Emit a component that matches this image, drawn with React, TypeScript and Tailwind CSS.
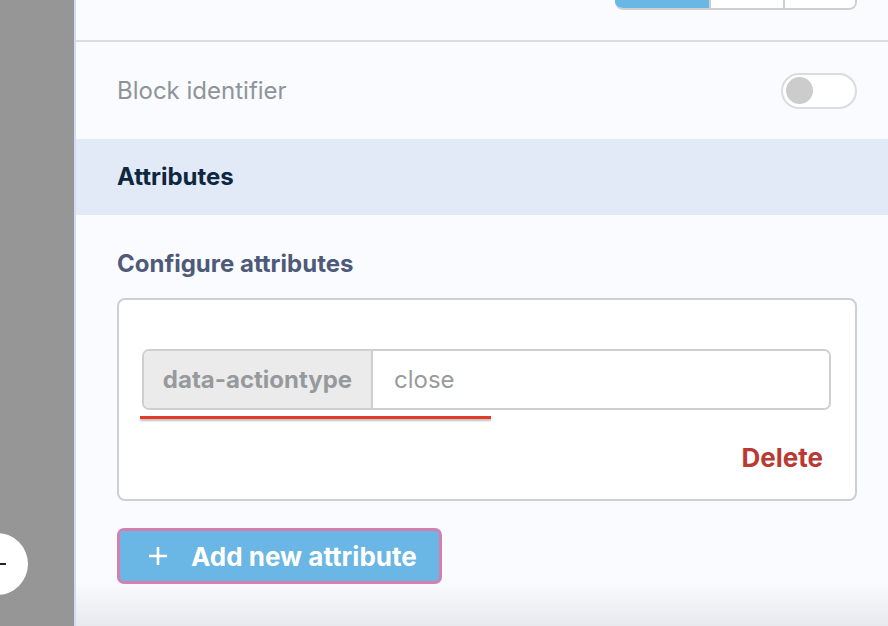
import React from "react";

export default function App() {
  return (
    <div
      className="w-[888px] h-[626px] flex overflow-hidden relative"
      style={{ fontFamily: "Inter, 'Noto Sans', sans-serif" }}
    >
      <div className="w-[74px] shrink-0 bg-[#969696] relative">
        <div className="absolute left-[-34px] top-[533px] w-[62px] h-[62px] rounded-full bg-white flex items-center justify-end pr-[22px]">
          <div className="w-[9px] h-[2px] bg-[#222]" />
        </div>
      </div>
      <div className="w-[2px] shrink-0 bg-[#d3ddf2]" />
      <div className="flex-1 bg-[#f9fbfe] flex flex-col relative">
        <div className="h-[40px] flex justify-end pr-[31px]">
          <div className="-mt-[31px] h-[41px] flex rounded-b-[8px] overflow-hidden border-2 border-[#cfcfcf] border-l-0">
            <div className="w-[94px] bg-[#6ab6e4]" />
            <div className="w-[74px] bg-white border-l-2 border-[#cfcfcf]" />
            <div className="w-[72px] bg-white border-l-2 border-[#cfcfcf]" />
          </div>
        </div>
        <div className="h-[2px] bg-[#dcdcdc]" />
        <div className="h-[97px] flex items-center justify-between pl-[41px] pr-[31px]">
          <span className="text-[24px] text-[#8f9499]">Block identifier</span>
          <div className="w-[76px] h-[36px] rounded-full border-2 border-[#dcdcdc] bg-white flex items-center pl-[3px]">
            <div className="w-[27px] h-[27px] rounded-full bg-[#cccccc]" />
          </div>
        </div>
        <div className="h-[76px] bg-[#e2e9f7] flex items-center pl-[41px]">
          <span className="text-[24px] font-bold text-[#0d2740]">Attributes</span>
        </div>
        <div className="pl-[41px] pr-[31px] pt-[34px] flex flex-col">
          <div className="text-[24px] leading-[30px] font-bold text-[#4e5a78]">Configure attributes</div>
          <div className="mt-[19px] h-[203px] bg-white border-2 border-[#cfcfcf] rounded-[8px] pt-[49px] pl-[23px] pr-[24px] relative">
            <div className="h-[61px] flex border-2 border-[#cfcfcf] rounded-[7px] overflow-hidden">
              <div className="w-[229px] bg-[#ebebeb] border-r-2 border-[#cfcfcf] flex items-center justify-center">
                <span className="text-[24px] font-bold text-[#979a9d]">data-actiontype</span>
              </div>
              <div className="flex-1 bg-white flex items-center pl-[21px]">
                <span className="text-[24px] text-[#999b9e]">close</span>
              </div>
            </div>
            <div className="absolute left-[21px] top-[116px] w-[351px] h-[3px] bg-[#e23b28] shadow-[0_2px_2px_rgba(0,0,0,0.25)]" />
            <div className="flex justify-end pr-[8px] mt-[28px]">
              <span className="text-[26px] leading-[39px] font-bold text-[#b93a32]">Delete</span>
            </div>
          </div>
          <div className="mt-[27px]">
            <button className="w-[325px] h-[56px] rounded-[7px] bg-[#6ab6e4] border-[3px] border-[#d47fae] flex items-center pl-[28px] text-white">
              <svg width="20" height="20" viewBox="0 0 20 20" className="mr-[23px]">
                <path d="M10 1V19M1 10H19" stroke="white" strokeWidth="2.6" strokeLinecap="butt" />
              </svg>
              <span className="text-[26px] font-bold">Add new attribute</span>
            </button>
          </div>
        </div>
        <div className="absolute left-0 right-0 bottom-0 h-[44px] bg-gradient-to-b from-transparent to-[#e8e9ee] pointer-events-none" />
      </div>
    </div>
  );
}
